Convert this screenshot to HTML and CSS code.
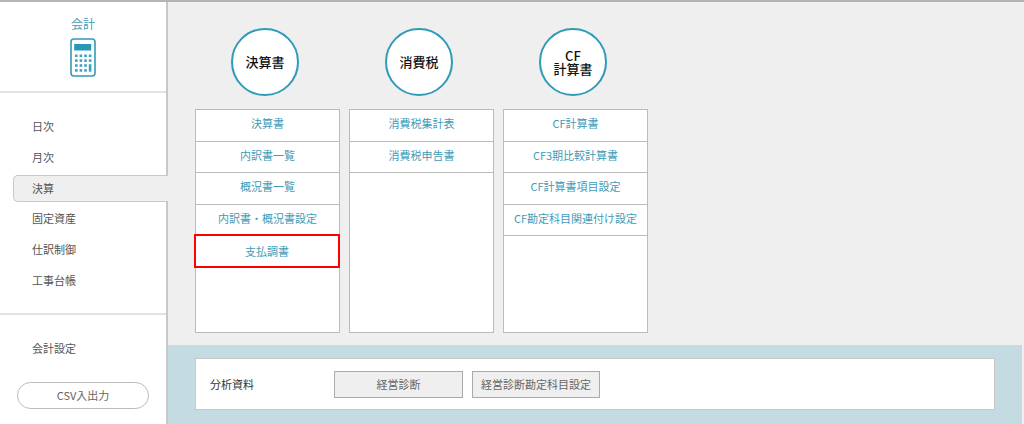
FILE: index.html
```html
<!DOCTYPE html>
<html lang="ja">
<head>
<meta charset="utf-8">
<title>会計</title>
<link rel="stylesheet" href="styles.css">
</head>
<body>
<div class="app">
  <aside class="sidebar">
    <div class="brand">
      <div class="brand-title">会計</div>
      <svg class="calc" width="26" height="39" viewBox="0 0 26 39">
        <rect x="1" y="1" width="24" height="37" rx="3" fill="#fff" stroke="#2f9bb9" stroke-width="1.6"/>
        <rect x="4.2" y="6" width="17" height="6.5" fill="#2896b5"/>
        <g fill="#3fa3bf">
          <rect x="5" y="16.5" width="2.6" height="2.6"/><rect x="9.6" y="16.5" width="2.6" height="2.6"/><rect x="14.2" y="16.5" width="2.6" height="2.6"/><rect x="18.8" y="16.5" width="2.6" height="2.6"/>
          <rect x="5" y="21.3" width="2.6" height="2.6"/><rect x="9.6" y="21.3" width="2.6" height="2.6"/><rect x="14.2" y="21.3" width="2.6" height="2.6"/><rect x="18.8" y="21.3" width="2.6" height="2.6"/>
          <rect x="5" y="26.2" width="2.6" height="2.6"/><rect x="9.6" y="26.2" width="2.6" height="2.6"/><rect x="14.2" y="26.2" width="2.6" height="2.6"/><rect x="18.8" y="26.2" width="2.6" height="7.5"/>
          <rect x="5" y="31.1" width="2.6" height="2.6"/><rect x="9.6" y="31.1" width="2.6" height="2.6"/><rect x="14.2" y="31.1" width="2.6" height="2.6"/>
        </g>
      </svg>
    </div>
    <nav class="nav">
      <a class="nav-item">日次</a>
      <a class="nav-item">月次</a>
      <a class="nav-item active">決算</a>
      <a class="nav-item">固定資産</a>
      <a class="nav-item">仕訳制御</a>
      <a class="nav-item">工事台帳</a>
    </nav>
    <div class="settings">
      <a class="nav-item">会計設定</a>
      <a class="csv-btn">CSV入出力</a>
    </div>
  </aside>
  <main class="main">
    <section class="columns">
      <div class="column">
        <div class="circle">決算書</div>
        <ul class="list">
          <li class="row">決算書</li>
          <li class="row">内訳書一覧</li>
          <li class="row">概況書一覧</li>
          <li class="row">内訳書・概況書設定</li>
          <li class="row marked">支払調書</li>
        </ul>
      </div>
      <div class="column">
        <div class="circle">消費税</div>
        <ul class="list">
          <li class="row">消費税集計表</li>
          <li class="row">消費税申告書</li>
        </ul>
      </div>
      <div class="column">
        <div class="circle">CF<br>計算書</div>
        <ul class="list">
          <li class="row">CF計算書</li>
          <li class="row">CF3期比較計算書</li>
          <li class="row">CF計算書項目設定</li>
          <li class="row">CF勘定科目関連付け設定</li>
        </ul>
      </div>
    </section>
    <section class="band">
      <div class="card">
        <div class="card-label">分析資料</div>
        <a class="btn first">経営診断</a>
        <a class="btn">経営診断勘定科目設定</a>
      </div>
    </section>
  </main>
</div>
</body>
</html>
```
FILE: styles.css
```css
* { box-sizing: border-box; }
html, body { margin: 0; padding: 0; height: 100%; overflow: hidden; }
body {
  background: #fff;
  font-family: "Noto Sans CJK JP", "Noto Sans", sans-serif;
  font-size: 11px;
  color: #555;
}
ul { list-style: none; margin: 0; padding: 0; }
.app {
  display: flex;
  height: 424px;
  border-top: 2px solid #b4b4b4;
}
.sidebar {
  width: 168px;
  flex: none;
  border-right: 2px solid #c8c8c8;
  display: flex;
  flex-direction: column;
  background: #fff;
}
.brand {
  height: 91px;
  border-bottom: 2px solid #e2e2e2;
  display: flex;
  flex-direction: column;
  align-items: center;
  padding-top: 14px;
  flex: none;
}
.brand-title {
  color: #3d9dba;
  font-size: 12px;
  line-height: 16px;
  margin-bottom: 6px;
}
.calc { display: block; }
.nav {
  height: 222px;
  flex: none;
  padding-top: 18px;
  border-bottom: 2px solid #e2e2e2;
}
.nav-item {
  display: block;
  height: 30.7px;
  line-height: 30.7px;
  padding-left: 32px;
  color: #555;
}
.nav-item.active {
  height: 27px;
  line-height: 25px;
  margin: 3px -2px 1px 13px;
  padding-left: 18px;
  background: #efefef;
  border: 1px solid #c8c8c8;
  border-right: 0;
  border-radius: 5px 0 0 5px;
}
.settings { padding-top: 18px; }
.csv-btn {
  display: block;
  width: 132px;
  height: 27px;
  margin: 18px 0 0 17px;
  border: 1px solid #bbb;
  border-radius: 14px;
  text-align: center;
  line-height: 24px;
  color: #666;
}
.main {
  flex: 1;
  background: #efefef;
  padding-right: 2px;
  display: flex;
  flex-direction: column;
}
.columns {
  height: 343px;
  flex: none;
  display: flex;
  gap: 9px;
  padding: 26px 0 0 27px;
}
.column { width: 145px; }
.circle {
  width: 68px;
  height: 68px;
  margin: 0 0 13px 36px;
  border: 2px solid #2f9bb9;
  border-radius: 50%;
  background: #fff;
  color: #111;
  font-size: 13px;
  font-weight: 500;
  line-height: 13.5px;
  text-align: center;
  display: flex;
  align-items: center;
  justify-content: center;
}
.list {
  height: 224px;
  background: #fff;
  border: 1px solid #bbb;
}
.row {
  height: 31.5px;
  line-height: 27.6px;
  border-bottom: 1px solid #bbb;
  text-align: center;
  color: #3f9bb9;
}
.row.marked {
  height: 30px;
  margin-right: 1px;
  border-bottom: 0;
  outline: 2px solid #f00;
  line-height: 31px;
}
.band {
  flex: 1;
  background: #c5dbe2;
  padding: 13px 27px 14px;
}
.card {
  height: 52px;
  background: #fff;
  border: 1px solid #c8c8c8;
  display: flex;
  align-items: center;
  padding-left: 14px;
}
.card-label { width: 124px; color: #333; }
.btn {
  width: 128px;
  height: 27px;
  background: #efefef;
  border: 1px solid #aaa;
  text-align: center;
  line-height: 25px;
  color: #666;
  margin-left: 9px;
}
.btn.first { width: 129px; margin-left: 0; }
```
